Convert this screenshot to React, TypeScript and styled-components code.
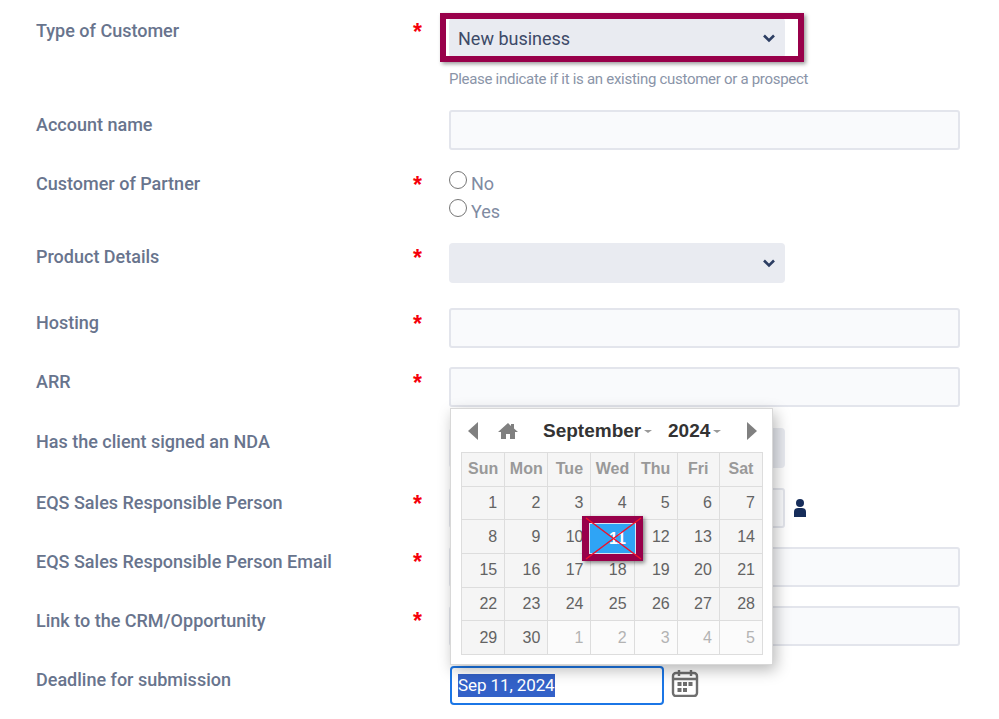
import React from "react";
import styled, { createGlobalStyle } from "styled-components";

const Global = createGlobalStyle`
  html, body { margin: 0; padding: 0; background: #fff; }
  body { width: 999px; height: 719px; overflow: hidden; font-family: Roboto, "Liberation Sans", sans-serif; }
`;

const Form = styled.div`
  position: relative;
  width: 999px;
  height: 719px;
  overflow: hidden;
  padding: 18px 39px 0 36px;
  box-sizing: border-box;
`;
const Row = styled.div<{ $top: number }>`
  display: grid;
  grid-template-columns: 377px 36px 1fr;
  margin-top: ${(p) => p.$top}px;
  align-items: start;
`;
const Label = styled.div<{ $off?: number }>`
  font-size: 18px;
  font-weight: 500;
  line-height: 24px;
  color: #68748d;
  padding-top: ${(p) => p.$off ?? 3}px;
`;
const Star = styled.div<{ $off?: number }>`
  color: #f5000a;
  font-family: "Liberation Sans", sans-serif;
  font-size: 23px;
  font-weight: 700;
  line-height: 24px;
  height: 24px;
  padding-top: ${(p) => p.$off ?? 4}px;
`;
const Field = styled.div`
  position: relative;
  display: flex;
  align-items: center;
  gap: 8px;
`;
const Input = styled.div<{ $w?: number }>`
  box-sizing: border-box;
  width: ${(p) => (p.$w ? `${p.$w}px` : "100%")};
  height: 40px;
  background: #f9fafc;
  border: 2px solid #e3e5ec;
  border-radius: 3px;
`;
const Select = styled.div`
  box-sizing: border-box;
  width: 336px;
  height: 40px;
  background: #e9ebf1;
  border-radius: 4px;
  display: flex;
  align-items: center;
  justify-content: space-between;
  padding: 0 9px;
  color: #3d4a68;
  font-size: 18px;
`;
const Chevron = () => (
  <svg width="14" height="10" viewBox="0 0 14 10" fill="none">
    <path d="M2 2.5 7 7.5 12 2.5" stroke="#2c3e63" strokeWidth="2.6" />
  </svg>
);
const Help = styled.div`
  margin-top: 11px;
  font-size: 15px;
  letter-spacing: -0.29px;
  line-height: 20px;
  color: #8a94a8;
`;
const Radios = styled.div`
  display: flex;
  flex-direction: column;
  gap: 4px;
  padding-top: 2px;
`;
const RadioRow = styled.label`
  display: flex;
  align-items: center;
  gap: 4px;
  height: 24px;
  font-size: 18px;
  color: #808ba2;
`;
const RadioMark = styled.span`
  box-sizing: border-box;
  width: 18px;
  height: 18px;
  border: 1.5px solid #767676;
  border-radius: 50%;
  background: #fff;
  margin-top: -7px;
`;
const Highlight = styled.div`
  position: absolute;
  left: -9px;
  top: -5px;
  width: 364px;
  height: 49px;
  box-sizing: border-box;
  border: 6px solid #98004a;
  box-shadow: 2px 2px 4px rgba(0, 0, 0, 0.4);
  pointer-events: none;
`;
const DateInput = styled.div`
  box-sizing: border-box;
  width: 214px;
  height: 39px;
  margin-left: 1px;
  border: 2px solid #1b76e6;
  border-radius: 4px;
  background: #fff;
  display: flex;
  align-items: center;
  padding-left: 6px;
  font-size: 17px;
  color: #fff;
`;
const Selected = styled.span`
  background: #3361c8;
  line-height: 23px;
  letter-spacing: -0.1px;
`;
const Calendar = styled.div`
  position: absolute;
  left: 450px;
  top: 408px;
  width: 323px;
  height: 257px;
  box-sizing: border-box;
  background: #fff;
  border: 1px solid #d8d8d8;
  padding: 0 10px;
  box-shadow: 3px 5px 14px rgba(0, 0, 0, 0.28);
  font-family: "Liberation Sans", sans-serif;
`;
const CalHead = styled.div`
  height: 43px;
  display: flex;
  align-items: center;
  color: #808080;
  position: relative;
`;
const Title = styled.span<{ $w: number }>`
  width: ${(p) => p.$w}px;
  font-size: 19px;
  font-weight: 700;
  color: #333;
  display: flex;
  align-items: center;
  white-space: nowrap;
`;
const Caret = styled.i`
  margin: 2px 0 0 3px;
  border-left: 4px solid transparent;
  border-right: 4px solid transparent;
  border-top: 3px solid #999;
`;
const Grid = styled.div`
  display: grid;
  grid-template-columns: 43.1fr 43fr 43fr 43fr 43fr 42fr 43fr;
  grid-auto-rows: 33.7px;
  width: 302px;
  box-sizing: border-box;
  border-top: 1px solid #ddd;
  border-left: 1px solid #ddd;
`;
const Cell = styled.div<{ $kind?: "head" | "other" }>`
  box-sizing: border-box;
  border-right: 1px solid #ddd;
  border-bottom: 1px solid #ddd;
  display: flex;
  align-items: center;
  justify-content: ${(p) => (p.$kind === "head" ? "center" : "flex-end")};
  padding-right: ${(p) => (p.$kind === "head" ? 0 : 7)}px;
  font-size: 16px;
  font-weight: ${(p) => (p.$kind === "head" ? 700 : 400)};
  color: ${(p) => (p.$kind === "head" ? "#999" : p.$kind === "other" ? "#b3b3b3" : "#636363")};
  background: ${(p) => (p.$kind === "other" ? "#fbfbfb" : "#f5f5f5")};
`;
const Today = styled.div`
  position: absolute;
  left: 131px;
  top: 107px;
  width: 61px;
  height: 45px;
  box-sizing: border-box;
  border: 7px solid #98004a;
  box-shadow: 2px 2px 4px rgba(0, 0, 0, 0.45);
  background: #2fa4f5;
  outline: 1px solid #d6e6f2;
  outline-offset: -8px;
  color: #fff;
  font-size: 16px;
  font-weight: 700;
  display: flex;
  align-items: center;
  justify-content: flex-end;
  padding-right: 10px;
`;
const Cross = styled.svg`
  position: absolute;
  left: -7px;
  top: -7px;
  width: 61px;
  height: 45px;
`;
const CalIconBox = styled.svg`
  flex: none;
  margin: -6px 0 0 -1px;
`;

const days: [string, "other" | undefined][] = [];
for (let d = 1; d <= 30; d++) days.push([String(d), undefined]);
for (let d = 1; d <= 5; d++) days.push([String(d), "other"]);

export default function App() {
  return (
    <Form>
      <Global />
      <Row $top={0}>
        <Label $off={1}>Type of Customer</Label>
        <Star $off={2}>*</Star>
        <div>
          <Field>
            <Select>
              New business
              <Chevron />
            </Select>
            <Highlight />
          </Field>
          <Help>Please indicate if it is an existing customer or a prospect</Help>
        </div>
      </Row>
      <Row $top={21}>
        <Label>Account name</Label>
        <span />
        <Input />
      </Row>
      <Row $top={19}>
        <Label>Customer of Partner</Label>
        <Star>*</Star>
        <Radios>
          <RadioRow><RadioMark />No</RadioRow>
          <RadioRow><RadioMark />Yes</RadioRow>
        </Radios>
      </Row>
      <Row $top={20}>
        <Label $off={2}>Product Details</Label>
        <Star $off={3}>*</Star>
        <Select><span /><Chevron /></Select>
      </Row>
      <Row $top={25}>
        <Label>Hosting</Label>
        <Star>*</Star>
        <Input />
      </Row>
      <Row $top={19}>
        <Label>ARR</Label>
        <Star>*</Star>
        <Input />
      </Row>
      <Row $top={21}>
        <Label $off={2}>Has the client signed an NDA</Label>
        <span />
        <Select />
      </Row>
      <Row $top={20}>
        <Label>EQS Sales Responsible Person</Label>
        <Star>*</Star>
        <Field>
          <Input $w={336} />
          <svg width="14" height="20" viewBox="0 0 14 20">
            <circle cx="7" cy="5" r="4" fill="#162d5a" />
            <path d="M1 19v-5a4 4 0 0 1 4-4h4a4 4 0 0 1 4 4v5z" fill="#162d5a" />
          </svg>
        </Field>
      </Row>
      <Row $top={19}>
        <Label>EQS Sales Responsible Person Email</Label>
        <Star $off={3}>*</Star>
        <Input />
      </Row>
      <Row $top={19}>
        <Label>Link to the CRM/Opportunity</Label>
        <Star $off={3}>*</Star>
        <Input />
      </Row>
      <Row $top={20}>
        <Label $off={2}>Deadline for submission</Label>
        <span />
        <Field>
          <DateInput><Selected>Sep 11, 2024</Selected></DateInput>
          <CalIconBox width="28" height="28" viewBox="0 0 28 28" fill="none" stroke="#6e6e6e" strokeWidth="2.4">
            <rect x="2" y="4" width="24" height="23" rx="3" />
            <path d="M2 10h24M8 1v6M20 1v6" />
            <g fill="#6e6e6e" stroke="none">
              <rect x="6.5" y="13" width="4" height="4" />
              <rect x="12" y="13" width="4" height="4" />
              <rect x="17.5" y="13" width="4" height="4" />
              <rect x="6.5" y="19" width="4" height="4" />
              <rect x="12" y="19" width="4" height="4" />
            </g>
          </CalIconBox>
        </Field>
      </Row>
      <Calendar>
        <CalHead>
          <svg width="12" height="20" viewBox="0 0 12 20" style={{ marginLeft: 6 }}>
            <path d="M11 1v18L1 10z" fill="#808080" />
          </svg>
          <svg width="20" height="18" viewBox="0 0 20 18" style={{ marginLeft: 19, marginRight: 25 }}>
            <path d="M10 1 0 10h3v7h5v-5h4v5h5v-7h3l-4-3.6V2h-3v2z" fill="#808080" />
          </svg>
          <Title $w={125}>September<Caret /></Title>
          <Title $w={78}>2024<Caret /></Title>
          <svg width="12" height="20" viewBox="0 0 12 20">
            <path d="M1 1v18l10-9z" fill="#808080" />
          </svg>
        </CalHead>
        <Grid>
          {["Sun", "Mon", "Tue", "Wed", "Thu", "Fri", "Sat"].map((h) => (
            <Cell key={h} $kind="head">{h}</Cell>
          ))}
          {days.map(([d, k], i) => (
            <Cell key={i} $kind={k}>{d}</Cell>
          ))}
        </Grid>
        <Today>
          11
          <Cross viewBox="0 0 61 45">
            <path d="M4 2 59 43M59 2 4 43" stroke="#f0102a" strokeWidth="1.5" />
          </Cross>
        </Today>
      </Calendar>
    </Form>
  );
}
